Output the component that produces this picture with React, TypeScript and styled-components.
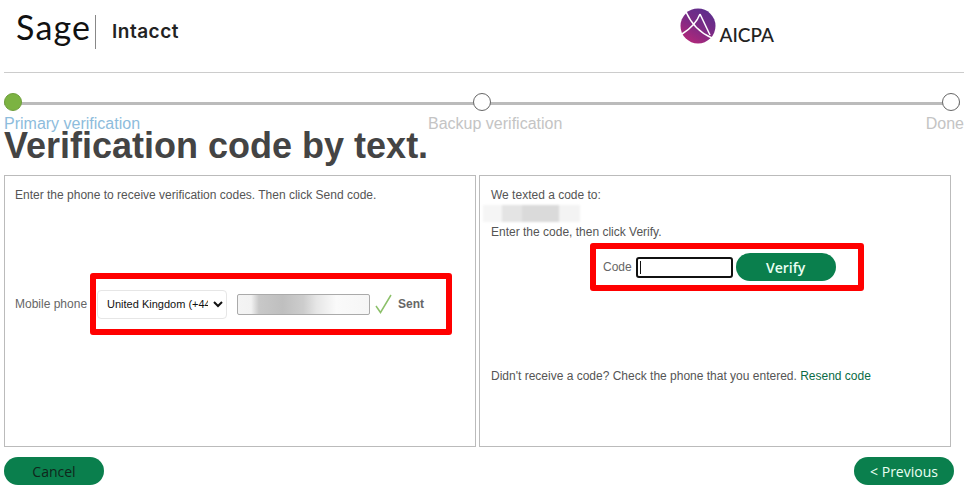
import React from "react";
import styled, { createGlobalStyle } from "styled-components";

const GlobalStyle = createGlobalStyle`
  html, body {
    margin: 0;
    padding: 0;
    background: #fff;
    font-family: "Liberation Sans", Arial, sans-serif;
  }
`;

const App = () => {
  return (
    <Page>
      <GlobalStyle />
      <Header>
        <SageBrand>
          <SageWord>Sage</SageWord>
          <BrandDivider />
          <ProductName>Intacct</ProductName>
        </SageBrand>
        <AicpaBrand>
          <AicpaMark />
          <AicpaWord>AICPA</AicpaWord>
        </AicpaBrand>
      </Header>

      <Track>
        <Dot active />
        <Dot />
        <Dot />
      </Track>
      <StepLabels>
        <StepLabel active>Primary verification</StepLabel>
        <BackupLabel>Backup verification</BackupLabel>
        <DoneLabel>Done</DoneLabel>
      </StepLabels>

      <Title>Verification code by text.</Title>

      <Panels>
        <Panel>
          <Copy>Enter the phone to receive verification codes. Then click Send code.</Copy>
          <PhoneRow>
            <FieldLabel>Mobile phone</FieldLabel>
            <PhoneHighlight>
              <CountrySelect defaultValue="uk">
                <option value="uk">United Kingdom (+44)</option>
              </CountrySelect>
              <PhoneInput readOnly />
              <CheckMark />
              <SentText>Sent</SentText>
            </PhoneHighlight>
          </PhoneRow>
        </Panel>

        <VerifyPanel>
          <Copy>We texted a code to:</Copy>
          <BlurredNumber />
          <Copy>Enter the code, then click Verify.</Copy>
          <CodeHighlight>
            <FieldLabel>Code</FieldLabel>
            <CodeInput readOnly />
            <PillButton bold>Verify</PillButton>
          </CodeHighlight>
          <ResendLine>
            Didn't receive a code? Check the phone that you entered.{" "}
            <ResendLink href="#">Resend code</ResendLink>
          </ResendLine>
        </VerifyPanel>
      </Panels>

      <Footer>
        <PillButton dark>Cancel</PillButton>
        <PillButton>&lt; Previous</PillButton>
      </Footer>
    </Page>
  );
};

export default App;

const AicpaMark = () => (
  <svg width="36" height="36" viewBox="0 0 36 36">
    <defs>
      <linearGradient id="aicpaFill" x1="0.8" y1="0.05" x2="0.25" y2="0.95">
        <stop offset="0" stopColor="#5c2e8c" />
        <stop offset="0.5" stopColor="#7c2a85" />
        <stop offset="1" stopColor="#b0287a" />
      </linearGradient>
    </defs>
    <circle cx="18" cy="18" r="17.5" fill="url(#aicpaFill)" />
    <path d="M6 4 C11 15 20 25 32 30" fill="none" stroke="#fff" strokeWidth="1.5" />
    <path d="M2 26 C10 21 17 14 20 6" fill="none" stroke="#fff" strokeWidth="1.5" />
    <path d="M20 6 L30 27" fill="none" stroke="#fff" strokeWidth="1.5" />
  </svg>
);

const CheckMark = () => (
  <CheckIcon width="17" height="20" viewBox="0 0 17 20">
    <path d="M1 12 L5.5 18.5 L16 1" fill="none" stroke="#8cc06a" strokeWidth="1.5" />
  </CheckIcon>
);

const Page = styled.div`
  width: 960px;
  margin-left: 4px;
`;

const Header = styled.header`
  box-sizing: border-box;
  height: 73px;
  display: flex;
  justify-content: space-between;
  padding: 8px 190px 0 12px;
  border-bottom: 1px solid #ccc;
`;

const SageBrand = styled.div`
  display: flex;
  align-items: flex-start;
`;

const SageWord = styled.span`
  width: 79px;
  margin-top: -3px;
  font-family: Lato, sans-serif;
  font-size: 34px;
  line-height: 44px;
  letter-spacing: 1.2px;
  color: #111;
`;

const BrandDivider = styled.span`
  width: 1px;
  height: 34px;
  margin-top: 7px;
  background: #888;
`;

const ProductName = styled.span`
  margin: 12px 0 0 16px;
  font-family: Inter, sans-serif;
  font-size: 19px;
  font-weight: 600;
  line-height: 24px;
  letter-spacing: 0.5px;
  color: #222;
`;

const AicpaBrand = styled.div`
  display: flex;
  align-items: flex-start;
  gap: 3px;
`;

const AicpaWord = styled.span`
  margin-top: 16px;
  font-family: Lato, sans-serif;
  font-size: 19px;
  font-weight: 500;
  line-height: 22px;
  color: #222;
`;

const Track = styled.div`
  display: flex;
  justify-content: space-between;
  width: 956px;
  margin-top: 20px;
  background: linear-gradient(#bbb, #bbb) 0 9px / 100% 3px no-repeat;
`;

const Dot = styled.span<{ active?: boolean }>`
  box-sizing: border-box;
  width: 18px;
  height: 18px;
  border-radius: 50%;
  border: 1px solid ${(props) => (props.active ? "#6f9f3c" : "#666")};
  background: ${(props) => (props.active ? "#7cb342" : "#fff")};
`;

const StepLabels = styled.div`
  display: flex;
  height: 18px;
  margin-top: 4px;
  font-size: 16px;
  line-height: 18px;
`;

const StepLabel = styled.span<{ active?: boolean }>`
  color: ${(props) => (props.active ? "#8dbcdc" : "#c4c4c4")};
`;

const BackupLabel = styled(StepLabel)`
  margin-left: 288px;
`;

const DoneLabel = styled(StepLabel)`
  margin-left: auto;
`;

const Title = styled.h1`
  margin: -5px 0 0;
  height: 36px;
  font-size: 36px;
  font-weight: 700;
  line-height: 36px;
  color: #444;
`;

const Panels = styled.div`
  display: grid;
  grid-template-columns: 472px 472px;
  gap: 3px;
  margin-top: 11px;
`;

const Panel = styled.section`
  box-sizing: border-box;
  height: 272px;
  padding: 12px 10px 0;
  border: 1px solid #bbb;
`;

const VerifyPanel = styled(Panel)`
  padding-left: 11px;
`;

const Copy = styled.p`
  margin: 0;
  font-size: 12px;
  line-height: 14px;
  color: #555;
`;

const PhoneRow = styled.div`
  display: flex;
  align-items: center;
  margin-top: 71px;
`;

const FieldLabel = styled.span`
  font-size: 12px;
  line-height: 14px;
  color: #666;
`;

const PhoneHighlight = styled.div`
  box-sizing: border-box;
  display: flex;
  align-items: center;
  width: 362px;
  height: 62px;
  margin-left: 3px;
  padding-left: 1px;
  border: 6px solid #f00;
  border-radius: 3px;
`;

const CountrySelect = styled.select`
  box-sizing: border-box;
  width: 130px;
  height: 29px;
  padding: 0 2px 0 5px;
  border: 1px solid #e6e6e6;
  border-radius: 4px;
  background: #fff;
  font-family: "Liberation Sans", sans-serif;
  font-size: 11px;
  color: #111;
`;

const PhoneInput = styled.input`
  box-sizing: border-box;
  width: 133px;
  height: 21px;
  margin-left: 10px;
  padding: 0;
  border: 1px solid #aaa;
  border-radius: 2px;
  background: linear-gradient(
    90deg,
    #f4f4f4 0%,
    #f2f2f2 10%,
    #c8c8c8 16%,
    #bfbfbf 34%,
    #cdcdcd 50%,
    #e6e6e6 60%,
    #fafafa 75%,
    #f6f6f6 100%
  );
`;

const CheckIcon = styled.svg`
  margin-left: 5px;
`;

const SentText = styled.span`
  margin-left: 6px;
  font-size: 12px;
  font-weight: 700;
  color: #666;
`;

const BlurredNumber = styled.div`
  width: 97px;
  height: 17px;
  margin: 3px 0 3px -8px;
  background: linear-gradient(
    90deg,
    #f5f5f5 0 20%,
    #e4e4e4 20% 40%,
    #dadada 40% 78%,
    #f3f3f3 78% 100%
  );
  filter: blur(1px);
`;

const CodeHighlight = styled.div`
  box-sizing: border-box;
  display: flex;
  align-items: center;
  width: 274px;
  height: 48px;
  margin: 4px 0 0 99px;
  padding-left: 7px;
  border: 6px solid #f00;
  border-radius: 3px;
`;

const CodeInput = styled.input`
  box-sizing: border-box;
  width: 97px;
  height: 21px;
  margin: 0 3px 0 4px;
  padding: 0;
  border: 2px solid #111;
  border-radius: 3px;
  outline: none;
  background: linear-gradient(#111, #111) 2px 2px / 1px 13px no-repeat #fff;
`;

const PillButton = styled.button<{ bold?: boolean; dark?: boolean }>`
  width: 100px;
  height: 28px;
  padding: 0;
  border: none;
  border-radius: 14px;
  background: #0a7f4d;
  font-family: "Open Sans", sans-serif;
  font-size: 14px;
  font-weight: ${(props) => (props.bold ? 600 : 400)};
  color: ${(props) => (props.dark ? "#10261b" : "#eafff3")};
`;

const ResendLine = styled.p`
  margin: 78px 0 0;
  font-size: 12px;
  line-height: 14px;
  color: #555;
`;

const ResendLink = styled.a`
  color: #0a6b45;
  text-decoration: none;
`;

const Footer = styled.footer`
  display: flex;
  justify-content: space-between;
  padding-right: 10px;
  margin-top: 10px;
`;
